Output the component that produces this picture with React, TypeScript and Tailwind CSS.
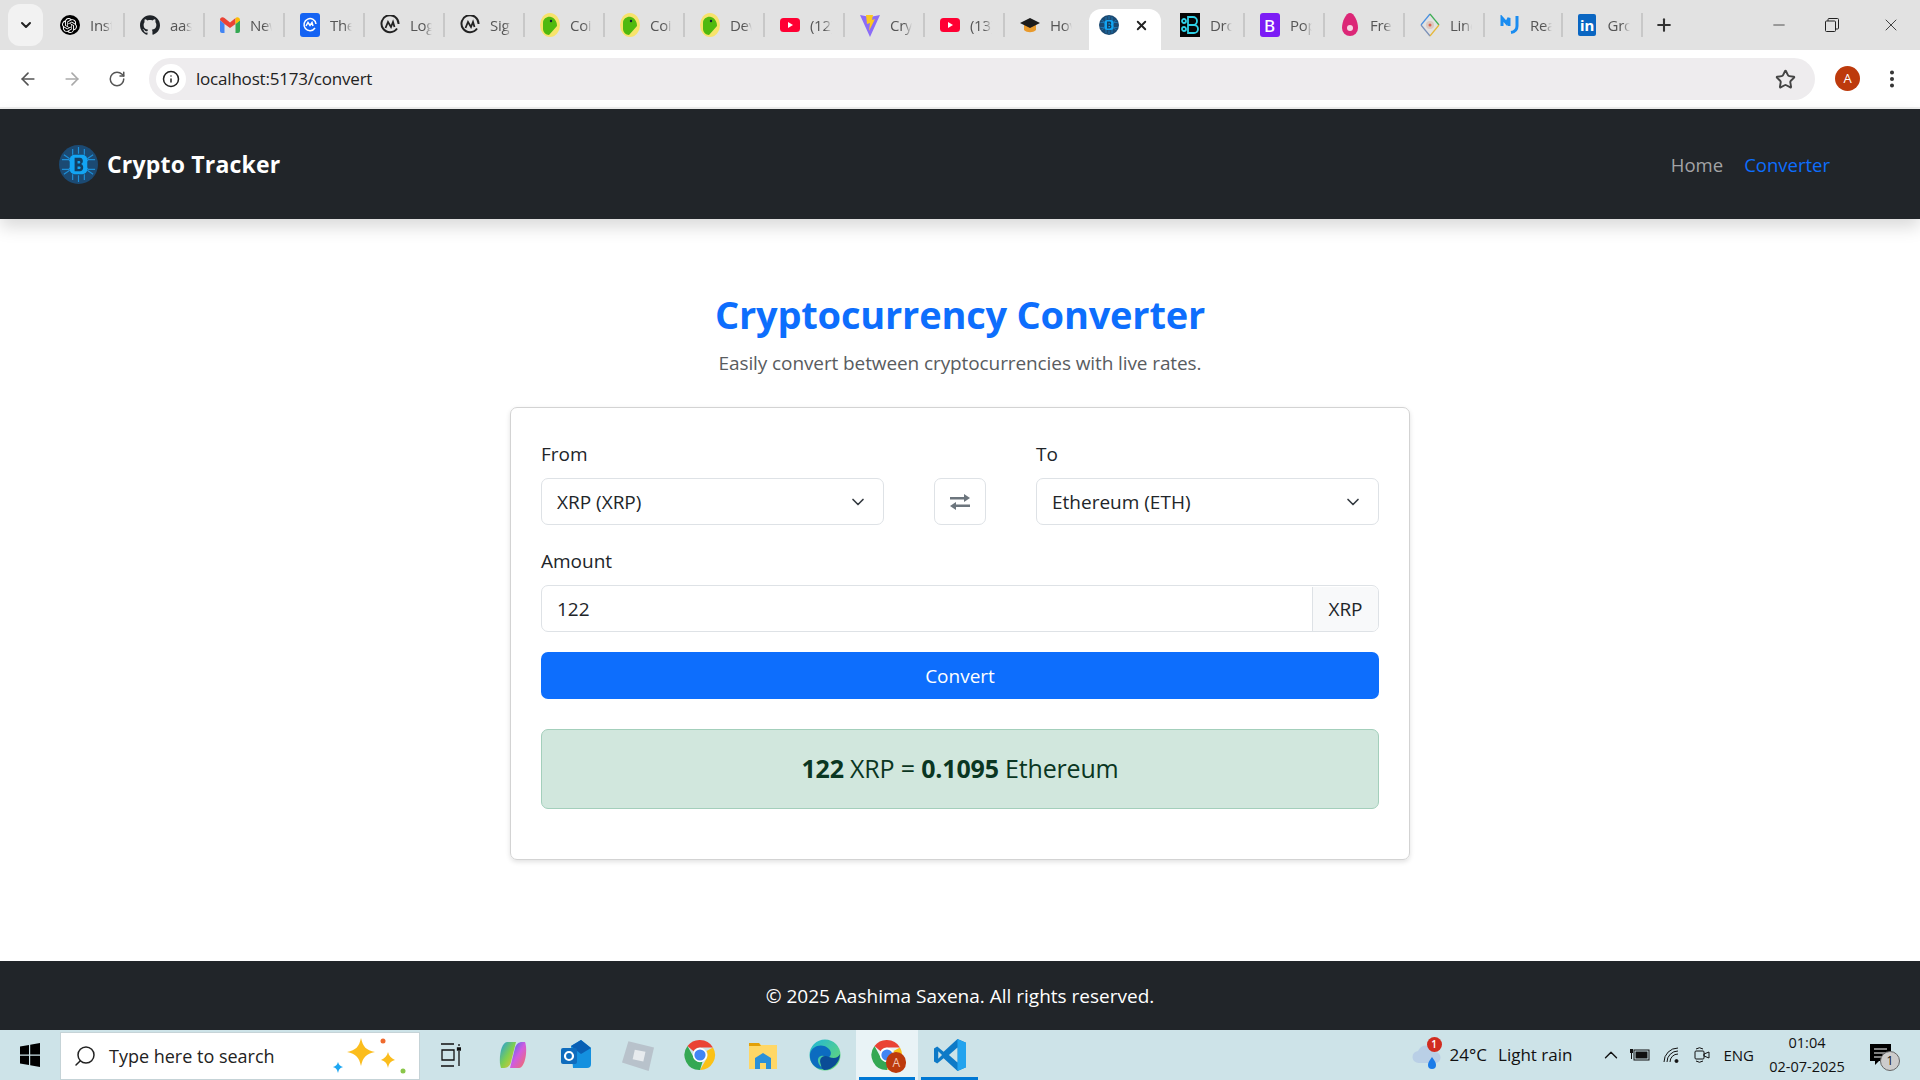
import { ArrowLeft, ArrowRight, ChevronDown, ChevronUp, Info, Minus, MoreVertical, Plus, RotateCw, Search, Star, X } from 'lucide-react';
import { SiGithub, SiOpenai } from 'react-icons/si';
import type { ReactNode } from 'react';

const font = { sans: 'font-["Open_Sans","Noto_Sans",sans-serif]' };

const Yt = () => (
  <svg viewBox="0 0 20 14" className="h-[14px] w-[20px]">
    <rect width="20" height="14" rx="3.5" fill="#ff0033" />
    <path d="M8 4l5 3-5 3z" fill="#fff" />
  </svg>
);
const Cmc = () => (
  <svg viewBox="0 0 20 20" className="h-5 w-5" fill="none" stroke="#222" strokeWidth="2">
    <path d="M17 13.5A8.5 8.5 0 1 1 18.5 9" />
    <path d="M5.5 13l2.5-6 3 5 2-5 1.5 5" strokeWidth="1.8" />
  </svg>
);
const Coin = () => (
  <svg viewBox="0 0 20 24" className="h-[24px] w-[20px]">
    <ellipse cx="10" cy="12" rx="10" ry="12" fill="#f7e36b" />
    <path d="M3 10c0-5 5-7 8-6 4 1 6 5 6 9l-8 9c-3 0-6-3-6-6z" fill="#4fb90f" />
    <circle cx="11" cy="8" r="1.2" fill="#123" />
  </svg>
);
const BtcLogo = ({ size }: { size: number }) => (
  <svg viewBox="0 0 40 40" width={size} height={size}>
    <circle cx="20" cy="20" r="20" fill="#1b4a73" />
    <g stroke="#1d8fd8" strokeWidth="1.2" fill="none">
      <path d="M3 15h7l3 3M3 25h7l3-3M37 15h-7l-3 3M37 25h-7l-3-3M14 4v6M20 2v7M26 4v6M14 36v-6M20 38v-7M26 36v-6M5 10l6 4M35 10l-6 4M5 30l6-4M35 30l-6-4" />
    </g>
    <rect x="11" y="10" width="18" height="20" rx="5" fill="#12a5f4" />
    <path d="M16 13h5.500c3.500 0 4 5.500 1 6.500 3.500 1 3 7.500-1 7.500H16zM19 16.500v2.500h2c1.200 0 1.200-2.500 0-2.500zM19 22v2.500h2.200c1.400 0 1.400-2.500 0-2.500z" fill="#123f63" fillRule="evenodd" />
  </svg>
);
const ChromeIcon = ({ size }: { size: number }) => (
  <svg viewBox="0 0 32 32" width={size} height={size}>
    <path d="M16 1a15 15 0 0 1 13 7.500H16a7.500 7.500 0 0 0-6.500 3.700L3.500 7A15 15 0 0 1 16 1z" fill="#ea4335" />
    <path d="M29 8.500A15 15 0 0 1 16 31l6.500-11.300A7.500 7.500 0 0 0 22.500 12z" fill="#fbc116" />
    <path d="M16 31A15 15 0 0 1 3.500 7l6 11a7.500 7.500 0 0 0 9 4.800z" fill="#34a853" />
    <circle cx="16" cy="16" r="7.200" fill="#fff" />
    <circle cx="16" cy="16" r="5.600" fill="#4285f4" />
  </svg>
);

const tabs: { icon: ReactNode; label: string; active?: boolean }[] = [
  { icon: <span className="flex h-5 w-5 items-center justify-center rounded-full bg-black"><SiOpenai className="h-[15px] w-[15px] text-white" /></span>, label: 'Inst' },
  { icon: <SiGithub className="h-5 w-5 text-[#1f2328]" />, label: 'aas' },
  {
    icon: (
      <svg viewBox="0 0 20 16" className="h-4 w-5">
        <path d="M0 3v11a2 2 0 0 0 2 2h2.500V7z" fill="#4285f4" />
        <path d="M20 3v11a2 2 0 0 1-2 2h-2.500V7z" fill="#34a853" />
        <path d="M0 3l4.500 4L10 11l5.500-4L15.500 1 10 5.500 4.500 1C2.500-.5 0 .5 0 3z" fill="#ea4335" />
        <path d="M15.500 1v6L20 3.500C20 .5 17.500-.5 15.500 1z" fill="#fbbc04" />
      </svg>
    ),
    label: 'New',
  },
  {
    icon: (
      <svg viewBox="0 0 20 24" className="h-[24px] w-5">
        <rect width="20" height="24" rx="3" fill="#1463f3" />
        <path d="M15 15a6 6 0 1 1 1-4M6 13l2-3.500 2 3 2-3 1 3.500" fill="none" stroke="#fff" strokeWidth="1.500" />
      </svg>
    ),
    label: 'The',
  },
  { icon: <Cmc />, label: 'Log' },
  { icon: <Cmc />, label: 'Sig' },
  { icon: <Coin />, label: 'Coi' },
  { icon: <Coin />, label: 'Coi' },
  { icon: <Coin />, label: 'Dev' },
  { icon: <Yt />, label: '(12)' },
  {
    icon: (
      <svg viewBox="0 0 20 24" className="h-[24px] w-5">
        <path d="M0 2l10 2 10-2-10 22z" fill="#8b6cf7" />
        <path d="M6 2h7l-1 5 3-1-6 12 1-8-3 1z" fill="#fdc81f" />
      </svg>
    ),
    label: 'Cry',
  },
  { icon: <Yt />, label: '(13)' },
  {
    icon: (
      <svg viewBox="0 0 20 16" className="h-4 w-5">
        <path d="M4 8v5c3 3 9 3 12 0V8z" fill="#e99a2c" />
        <path d="M0 6l10-5 10 5-10 5z" fill="#1c1c1c" />
      </svg>
    ),
    label: 'Hov',
  },
  { icon: <BtcLogo size={20} />, label: '', active: true },
  {
    icon: (
      <svg viewBox="0 0 20 24" className="h-[24px] w-5">
        <rect width="20" height="24" fill="#050505" />
        <g fill="none" stroke="#2fd0e6" strokeWidth="1.800">
          <path d="M8 4h5a3 3 0 0 1 0 8H8zM8 12h6a3.500 3.500 0 0 1 0 8H8z" />
          <circle cx="4" cy="8" r="2" />
          <circle cx="4" cy="16" r="2" />
        </g>
      </svg>
    ),
    label: 'Dro',
  },
  {
    icon: (
      <span className="flex h-[24px] w-5 items-center justify-center rounded-[3px] bg-[#7c1cf5] text-[17px] font-medium leading-none text-white">B</span>
    ),
    label: 'Pop',
  },
  {
    icon: (
      <svg viewBox="0 0 16 24" className="h-[24px] w-4">
        <path d="M8 0c4 0 8 8 8 15a8 8 0 0 1-16 0C0 8 4 0 8 0z" fill="#dc2777" />
        <circle cx="8" cy="15" r="3" fill="#f7d7e4" />
      </svg>
    ),
    label: 'Free',
  },
  {
    icon: (
      <svg viewBox="0 0 20 24" className="h-[24px] w-5" fill="none" strokeWidth="1.200">
        <path d="M10 1L1 12" stroke="#4a8fe0" />
        <path d="M10 1l9 11" stroke="#3fae56" />
        <path d="M1 12l9 11" stroke="#7a90b8" />
        <path d="M19 12l-9 11" stroke="#e5b73b" />
        <circle cx="10" cy="12" r="4" fill="#dcc9c0" />
        <circle cx="10" cy="12" r="1.500" fill="#d9634f" />
      </svg>
    ),
    label: 'Line',
  },
  {
    icon: (
      <svg viewBox="0 0 20 20" className="h-5 w-5" fill="none" stroke="#1a8cf0" strokeWidth="3">
        <path d="M2 11V3l4.500 5L9 3v8" />
        <path d="M17 1v10c0 4-3 6-6 6.500" />
      </svg>
    ),
    label: 'Rea',
  },
  {
    icon: (
      <span className="flex h-[22px] w-[18px] items-center justify-center rounded-[2px] bg-[#0a66c2] text-[15px] font-bold leading-none text-white">in</span>
    ),
    label: 'Gro',
  },
];

function TabStrip() {
  return (
    <div className="flex h-[50px] items-center bg-[#e2e2e2]">
      <div className="ml-2 flex h-[42px] w-[35px] items-center justify-center rounded-xl bg-[#f2f2f2]">
        <ChevronDown size={16} strokeWidth={3} className="text-[#222]" />
      </div>
      <div className="ml-[2px] flex h-full">
        {tabs.map((t, i) =>
          t.active ? (
            <div key={i} className="relative flex h-full w-[80px] items-center pl-[14px]">
              <div className="absolute inset-x-[4px] bottom-0 top-[9px] rounded-t-xl bg-white" />
              <span className="relative flex w-5 justify-center"><BtcLogo size={20} /></span>
              <X size={15} strokeWidth={3} className="relative ml-[15px] text-[#222]" />
            </div>
          ) : (
            <div key={i} className={`flex h-full items-center ${t.label === 'Rea' ? 'w-[77.6px]' : 'w-[80px]'}`}>
              <span className="flex w-[48px] items-center justify-center pl-[1px]">{t.icon}</span>
              <span className={`-ml-[3px] w-[22px] overflow-hidden whitespace-nowrap text-[15px] tracking-[-0.3px] text-[#555] [mask-image:linear-gradient(90deg,#000_65%,transparent)] ${font.sans}`}>{t.label}</span>
              {!tabs[i + 1]?.active && <span className="ml-auto h-[24px] w-[2px] bg-[#c8c8c8]" />}
            </div>
          ),
        )}
      </div>
      <Plus size={20} strokeWidth={2.500} className="ml-[11px] text-[#333]" />
      <div className="ml-auto flex items-center text-[#222]">
        <Minus size={18} strokeWidth={1} className="mr-[37px]" />
        <svg viewBox="0 0 14 14" className="mr-[42px] h-[14px] w-[14px]" fill="none" stroke="#222">
          <rect x=".5" y="3" width="10" height="10.500" rx="1" />
          <path d="M3 3V1.500a1 1 0 0 1 1-1h8.500a1 1 0 0 1 1 1V10a1 1 0 0 1-1 1h-2" />
        </svg>
        <X size={20} strokeWidth={1} className="mr-[19px]" />
      </div>
    </div>
  );
}

function Toolbar() {
  return (
    <div className="flex h-[59px] items-start rounded-t-xl border-b-[2px] border-[#eeeeee] bg-white pt-2">
      <ArrowLeft size={20} className="ml-[18px] mt-[11px] text-[#555]" />
      <ArrowRight size={20} className="ml-[24px] mt-[11px] text-[#aaa]" />
      <RotateCw size={18} className="ml-[26px] mt-[12px] text-[#555]" />
      <div className="ml-[23px] flex h-[42px] w-[1666px] items-center rounded-full bg-[#eeecee] pl-[7px]">
        <span className="flex h-[30px] w-[30px] items-center justify-center rounded-full bg-white">
          <Info size={18} className="text-[#222]" />
        </span>
        <span className={`ml-[10px] text-[17px] tracking-[-0.2px] text-[#222] ${font.sans}`}>localhost:5173/convert</span>
        <Star size={21} strokeWidth={2.200} className="ml-auto mr-[19px] text-[#444]" />
      </div>
      <span className={`ml-[20px] mt-[8px] flex h-[25px] w-[25px] items-center justify-center rounded-full bg-[#bd3a0c] text-[13px] text-white ${font.sans}`}>A</span>
      <MoreVertical size={22} strokeWidth={2.400} className="ml-[21px] mt-[10px] text-[#333]" />
    </div>
  );
}

function Navbar() {
  return (
    <nav className="flex h-[110px] items-center bg-[#212529] pl-[59px] pr-[90px] shadow-[0_8px_16px_rgba(0,0,0,0.15)]">
      <BtcLogo size={39} />
      <span className={`ml-[9px] text-[23px] font-bold tracking-[0.2px] text-white ${font.sans}`}>Crypto Tracker</span>
      <div className={`ml-auto flex gap-[21px] pt-[2px] text-[18.5px] ${font.sans}`}>
        <span className="text-[#a3a4a6]">Home</span>
        <span className="text-[#0d6efd]">Converter</span>
      </div>
    </nav>
  );
}

function SelectBox({ label, value }: { label: string; value: string }) {
  return (
    <div className="w-[343px]">
      <div className="mb-[9px] text-[19px] leading-[30px] text-[#212529]">{label}</div>
      <div className="flex h-[47px] items-center justify-between rounded-[7px] border border-[#dee2e6] pl-[15px] pr-[15px] pt-[1px] text-[19px] text-[#212529]">
        {value}
        <ChevronDown size={20} strokeWidth={2} className="text-[#343a40]" />
      </div>
    </div>
  );
}

function ConverterCard() {
  return (
    <div className={`mt-[29px] h-[453px] w-[900px] rounded-[7px] border border-[#d3d3d3] px-[30px] pt-[31px] shadow-[0_2px_5px_rgba(0,0,0,0.12)] ${font.sans}`}>
      <div className="flex items-end justify-between">
        <SelectBox label="From" value="XRP (XRP)" />
        <button className="flex h-[47px] w-[52px] items-center justify-center rounded-[7px] border border-[#dee2e6]">
          <svg viewBox="0 0 20 16" className="h-4 w-5" fill="#6c757d">
            <path d="M0 3h14V0l6 4-6 4V5.500H0zM20 10.500H6V8l-6 4 6 4v-3h14z" />
          </svg>
        </button>
        <SelectBox label="To" value="Ethereum (ETH)" />
      </div>
      <div className="mb-[9px] mt-[21px] text-[19px] leading-[30px] text-[#212529]">Amount</div>
      <div className="flex h-[47px] overflow-hidden rounded-[7px] border border-[#dee2e6] pt-[1px] text-[19px] text-[#212529]">
        <div className="flex flex-1 items-center pl-[15px]">122</div>
        <div className="flex w-[66px] items-center justify-center border-l border-[#dee2e6] bg-[#f8f9fa]">XRP</div>
      </div>
      <button className="mt-[20px] h-[47px] w-full rounded-[7px] bg-[#0d6efd] pt-[1px] text-[19px] text-white">Convert</button>
      <div className="mt-[30px] flex h-[80px] items-center justify-center rounded-[7px] border border-[#a3cfbb] bg-[#d1e7dd] text-[25px] tracking-[-0.18px] text-[#0a3622]">
        <b>122</b>&nbsp;XRP =&nbsp;<b>0.1095</b>&nbsp;Ethereum
      </div>
    </div>
  );
}

function Footer() {
  return (
    <footer className={`flex h-[69px] items-center justify-center bg-[#212529] pt-[1px] text-[19px] text-white ${font.sans}`}>
      © 2025 Aashima Saxena. All rights reserved.
    </footer>
  );
}

const TaskIcon = ({ children, active, open }: { children: ReactNode; active?: boolean; open?: boolean }) => (
  <div className={`relative flex h-full w-[62.3px] items-center justify-center ${active ? 'bg-[#e9f3f6]' : ''}`}>
    {children}
    {open && <span className="absolute inset-x-[3px] bottom-0 h-[3px] bg-[#0078d4]" />}
  </div>
);

function Taskbar() {
  return (
    <div className={`flex h-[50px] items-center bg-[#cde3e8] ${font.sans}`}>
      <div className="flex w-[60px] justify-center">
        <svg viewBox="0 0 20 24" className="h-[24px] w-5" fill="#000">
          <path d="M0 3.500l9-1.500v9.500H0zM10.200 1.800L20 0v11.500h-9.800zM0 12.700h9V22l-9-1.500zM10.200 12.700H20V24l-9.800-1.800z" />
        </svg>
      </div>
      <div className="flex h-[48px] w-[360px] items-center self-end border border-[#c5d3d7] bg-white">
        <Search size={24} strokeWidth={1.500} className="ml-[12px] -scale-x-100 text-[#222]" />
        <span className="ml-[12px] text-[18px] text-[#222]">Type here to search</span>
        <svg viewBox="0 0 76 36" className="ml-auto mr-[10px] h-[36px] w-[76px]">
          <path d="M28 0c2 9 5 12 14 14-9 2-12 5-14 14-2-9-5-12-14-14 9-2 12-5 14-14z" fill="#fbbd1d" />
          <path d="M55 14c1 4 3 6 7 8-4 1-6 3-7 8-1-5-3-7-7-8 4-2 6-4 7-8z" fill="#fbbd1d" />
          <path d="M5 24c1 3 2 4 5 5-3 1-4 2-5 6-1-4-2-5-5-6 3-1 4-2 5-5z" fill="#1ea7f2" />
          <circle cx="50" cy="3" r="2.500" fill="#ef6a2e" />
          <circle cx="70" cy="33" r="2.500" fill="#8ac64a" />
        </svg>
      </div>
      <div className="flex h-full">
        <TaskIcon>
          <svg viewBox="0 0 20 24" className="h-[24px] w-5" fill="none" stroke="#111" strokeWidth="1.300">
            <path d="M0 1h13M0 23h13M1 7h12v10H1zM18 1v2M18 8v15" />
            <path d="M16.500 5h3v2h-3z" fill="#111" />
          </svg>
        </TaskIcon>
        <TaskIcon>
          <svg viewBox="0 0 30 30" className="h-[30px] w-[30px]">
            <defs>
              <linearGradient id="cp1" x1="0" y1="0" x2="1" y2="1">
                <stop offset="0" stopColor="#1f9be8" />
                <stop offset=".5" stopColor="#7fcf4f" />
                <stop offset="1" stopColor="#f7c031" />
              </linearGradient>
              <linearGradient id="cp2" x1="0" y1="0" x2="1" y2="1">
                <stop offset="0" stopColor="#2a6ff0" />
                <stop offset=".5" stopColor="#d05be0" />
                <stop offset="1" stopColor="#f5705a" />
              </linearGradient>
            </defs>
            <path d="M9 2h9l-5 20c-1 4-4 6-7 6H3C0 20 3 2 9 2z" fill="url(#cp1)" />
            <path d="M21 28h-9l5-20c1-4 4-6 7-6h3c3 8 0 26-6 26z" fill="url(#cp2)" />
          </svg>
        </TaskIcon>
        <TaskIcon>
          <svg viewBox="0 0 30 30" className="h-[30px] w-[30px]">
            <path d="M10 6l10-6 10 8v16a4 4 0 0 1-4 4H12z" fill="#1490df" />
            <path d="M20 0l10 8-10 6-10-8z" fill="#0a5fb4" />
            <rect x="0" y="8" width="16" height="16" rx="2" fill="#0f6cbd" />
            <circle cx="8" cy="16" r="4" fill="none" stroke="#fff" strokeWidth="2.200" />
          </svg>
        </TaskIcon>
        <TaskIcon>
          <svg viewBox="0 0 30 30" className="h-[32px] w-[32px]">
            <path d="M6 2l24 6-5 22L0 22z" fill="#b8c2cb" />
            <path d="M12 10l10 2-2 9-10-2z" fill="#e7ebee" />
          </svg>
        </TaskIcon>
        <TaskIcon><ChromeIcon size={32} /></TaskIcon>
        <TaskIcon>
          <svg viewBox="0 0 28 28" className="h-[28px] w-[28px]">
            <path d="M0 2h10l2 2h16v24H0z" fill="#ffd766" />
            <path d="M0 2h10l2 3H0z" fill="#e3a008" />
            <path d="M6 28V17l8-5 8 5v11h-5v-6h-6v6z" fill="#2b90d9" />
          </svg>
        </TaskIcon>
        <TaskIcon>
          <svg viewBox="0 0 32 32" className="h-[32px] w-[32px]">
            <defs>
              <linearGradient id="ed1" x1="0" y1="0" x2="1" y2="1">
                <stop offset="0" stopColor="#1fb6d8" />
                <stop offset="1" stopColor="#6fdc6a" />
              </linearGradient>
            </defs>
            <circle cx="16" cy="16" r="15.500" fill="url(#ed1)" />
            <path d="M1 15C3 6 14 4 20 10c3 3 2 7 0 8-3 1-4-2-8-1-5 1-4 9 3 13C7 31 0 24 1 15z" fill="#0c6cc0" />
            <path d="M12 26c-3-7 2-11 8-8 5 2 9 1 11-3 0 8-7 16-16 16-2-1-3-3-3-5z" fill="#0a4c96" />
          </svg>
        </TaskIcon>
        <TaskIcon active open>
          <div className="relative h-8 w-8">
            <ChromeIcon size={32} />
            <span className="absolute -bottom-[2px] -right-[3px] flex h-[21px] w-5 items-center justify-center rounded-full bg-[#bd3a0c] text-[12px] text-[#f3c6b5]">A</span>
          </div>
        </TaskIcon>
        <TaskIcon open>
          <svg viewBox="0 0 30 30" className="h-[32px] w-[32px]">
            <path d="M22 0l8 3.500v23L22 30 9 18l-6 5-3-2v-12l3-2 6 5z" fill="#0e7ac7" />
            <path d="M22 0l8 3.500v23L22 30z" fill="#23a3ee" />
            <path d="M22 8l-8 7 8 7z" fill="#cde3e8" />
            <path d="M4 11.500L7.500 15 4 18.500z" fill="#cde3e8" />
          </svg>
        </TaskIcon>
      </div>
      <div className="ml-auto flex h-full items-center text-[#111]">
        <div className="relative mr-[9px] h-[28px] w-[30px]">
          <svg viewBox="0 0 30 28" className="h-[28px] w-[30px]">
            <path d="M8 22a6 6 0 0 1-1-12 9 9 0 0 1 17 1 5.500 5.500 0 0 1 0 11z" fill="#b9cfe6" />
            <path d="M21 16c3 4 4 6 4 8a4 4 0 0 1-8 0c0-2 1-4 4-8z" fill="#1a7be8" />
          </svg>
          <span className="absolute -right-[1px] -top-[4px] flex h-[15px] w-[15px] items-center justify-center rounded-full bg-[#d12c1f] text-[10px] font-semibold text-white">1</span>
        </div>
        <span className="text-[17px]">24°C</span>
        <span className="ml-[11px] text-[17px]">Light rain</span>
        <ChevronUp size={22} strokeWidth={1.500} className="ml-[28px]" />
        <svg viewBox="0 0 20 14" className="ml-[8px] h-[14px] w-5">
          <rect x="4" y="2" width="15" height="10" fill="none" stroke="#111" />
          <rect x="5.500" y="3.500" width="12" height="7" fill="#111" />
          <path d="M0 1h3v4H0zM1 5h1v6H1z" fill="#111" />
        </svg>
        <svg viewBox="0 0 16 16" className="ml-[13px] h-4 w-4" fill="none" stroke="#111">
          <path d="M1 15a14 14 0 0 1 14-14M4 15a11 11 0 0 1 11-11M7 15a8 8 0 0 1 8-8" />
          <circle cx="13.500" cy="14" r="1.500" fill="#111" />
        </svg>
        <svg viewBox="0 0 16 20" className="ml-[15px] h-5 w-4" fill="none" stroke="#111">
          <rect x="1" y="6" width="9" height="8" rx="1" />
          <path d="M10 9l5-2v6l-5-2zM2 4a6 6 0 0 1 7 0M2 16a6 6 0 0 0 7 0" />
        </svg>
        <span className="ml-[13px] text-[15px]">ENG</span>
        <div className="ml-[14px] flex w-[78px] flex-col items-center whitespace-nowrap text-[14.5px] leading-[24px]">
          <span>01:04</span>
          <span>02-07-2025</span>
        </div>
        <div className="relative ml-[24px] mr-[29px] h-[22px] w-[21px]">
          <svg viewBox="0 0 21 22" className="h-[22px] w-[21px]">
            <path d="M0 0h21v17H9l-4 4v-4H0z" fill="#000" />
            <path d="M4 5h13M4 9h13M4 13h9" stroke="#fff" />
          </svg>
          <span className="absolute -bottom-[5px] -right-[9px] flex h-[20px] w-[20px] items-center justify-center rounded-full border border-[#666] bg-[#ccc] text-[12px]">1</span>
        </div>
      </div>
    </div>
  );
}

export default function App() {
  return (
    <div className="flex h-screen w-screen flex-col overflow-hidden bg-white">
      <TabStrip />
      <Toolbar />
      <Navbar />
      <main className="flex flex-1 flex-col items-center pt-[69px]">
        <h1 className={`text-[38px] font-bold leading-[52px] tracking-[-0.2px] text-[#0d6efd] ${font.sans}`}>Cryptocurrency Converter</h1>
        <p className={`mt-[8px] text-[19px] leading-[30px] tracking-[-0.1px] text-[#595c5f] ${font.sans}`}>Easily convert between cryptocurrencies with live rates.</p>
        <ConverterCard />
      </main>
      <Footer />
      <Taskbar />
    </div>
  );
}
